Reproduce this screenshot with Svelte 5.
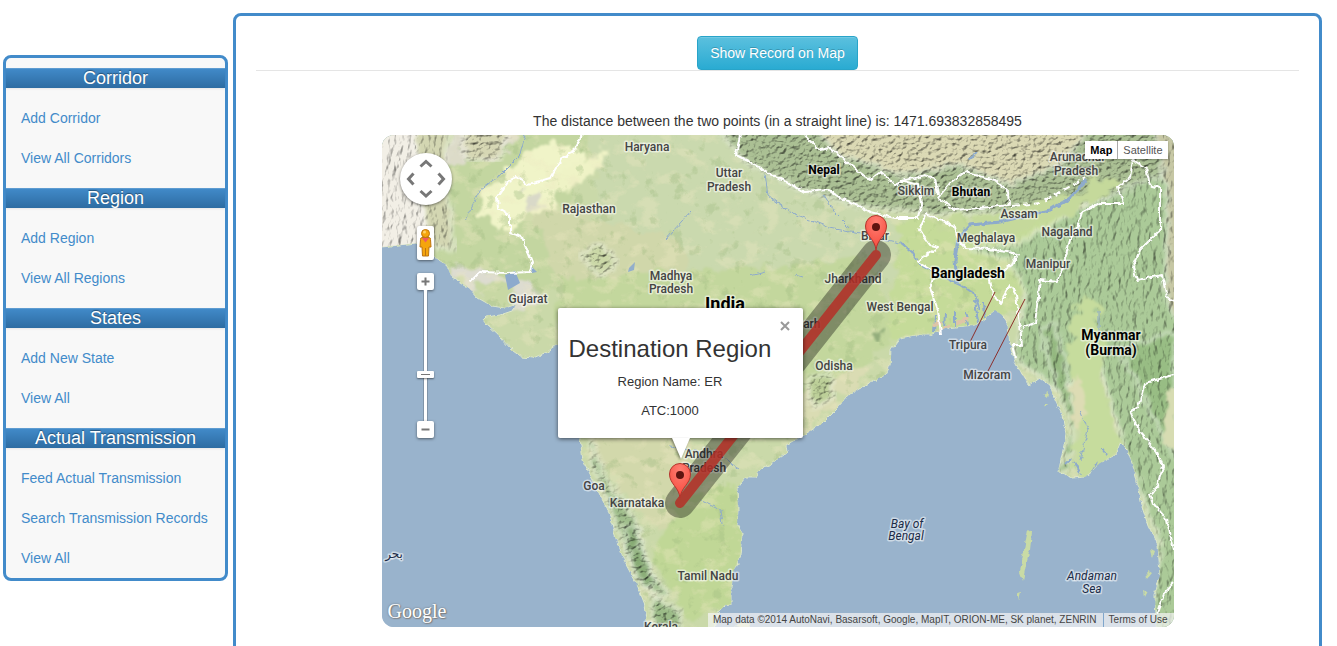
<script>
  const menu = [
    { title: 'Corridor', links: ['Add Corridor', 'View All Corridors'] },
    { title: 'Region', links: ['Add Region', 'View All Regions'] },
    { title: 'States', links: ['Add New State', 'View All'] },
    {
      title: 'Actual Transmission',
      links: ['Feed Actual Transmission', 'Search Transmission Records', 'View All'],
    },
  ];

  // Map coordinates share the viewBox of the terrain drawing.
  const states = [
    [647, 151, 'Haryana'],
    [729, 177, 'Uttar'],
    [729, 191, 'Pradesh'],
    [589, 213, 'Rajasthan'],
    [671, 280, 'Madhya'],
    [671, 293, 'Pradesh'],
    [528, 303, 'Gujarat'],
    [875, 240, 'Bihar'],
    [853, 283, 'Jharkhand'],
    [786, 328, 'Chhattisgarh'],
    [900, 311, 'West Bengal'],
    [834, 370, 'Odisha'],
    [916, 195, 'Sikkim'],
    [1077, 161, 'Arunachal'],
    [1076, 175, 'Pradesh'],
    [1019, 218, 'Assam'],
    [1067, 236, 'Nagaland'],
    [986, 242, 'Meghalaya'],
    [1048, 268, 'Manipur'],
    [968, 349, 'Tripura'],
    [987, 379, 'Mizoram'],
    [704, 458, 'Andhra'],
    [704, 472, 'Pradesh'],
    [594, 490, 'Goa'],
    [637, 507, 'Karnataka'],
    [708, 580, 'Tamil Nadu'],
    [661, 631, 'Kerala'],
  ];
  const countries = [
    [824, 174, 'Nepal', 12],
    [971, 196, 'Bhutan', 12],
    [968, 278, 'Bangladesh', 14],
    [1111, 340, 'Myanmar', 14],
    [1111, 355, '(Burma)', 14],
    [725, 310, 'India', 18],
  ];
  const seas = [
    [907, 528, 'Bay of'],
    [906, 540, 'Bengal'],
    [1092, 580, 'Andaman'],
    [1092, 593, 'Sea'],
  ];
  const pins = [
    [876, 229],
    [680, 477],
  ];
  const borders = [
    'M582 135L573 152L562 158L550 178L540 181L527 184L517 177L508 181L497 198L498 208L510 215V233L522 237L532 262L530 272L508 273L480 272L470 282',
    'M740 135L736 155L750 162L770 174L790 184L805 192L828 190L842 199L858 205L870 212L895 218H918L921 205L918 185L900 180',
    'M805 135L820 150L830 148L850 165L870 180L880 172L895 185L905 180L915 178L925 175L935 178L938 195',
    'M938 198L950 183L965 172L975 175L995 180L1008 192L1009 205L990 207L955 210Z',
    'M925 214L940 220L955 227L958 240L965 248L990 249L1018 254L1012 265L990 280L993 295L1000 303L1010 285L1016 295L1020 325L1022 345L1012 345L1015 358',
    'M925 216L919 230L930 245L938 247L917 262L935 272L930 288L938 310L941 334',
    'M1133 160L1130 177L1118 187L1123 203L1100 203L1082 212L1078 225L1070 240L1063 267L1057 282L1040 280L1035 323L1023 327',
    'M1133 160L1146 168L1150 185L1160 188V230L1140 250L1133 267L1137 280L1162 275L1167 298L1174 301',
    'M1174 375L1145 383L1138 407L1130 412L1140 432L1157 452L1163 466L1157 487L1150 495L1153 503L1167 520L1174 550',
    'M1174 583L1164 594L1157 613',
  ];
  const land =
    'M370 247L382 247L417 243L435 257L447 265L452 277L468 287L478 298L492 306L505 308L517 304L512 311L500 315L486 317L483 320L486 324L500 337L512 350L522 357L533 358L547 352L557 345L570 350L580 438L583 460L590 475L600 495L610 515L614 532L624 560L636 582L645 605L650 640H713L718 612L725 605L731 604V588L733 572L740 555L742 533L737 525L738 510L737 488L745 478L756 478L760 470L772 463L787 452L786 445L800 437L820 425L835 410L850 394L870 383L885 375L890 365L891 350L900 338L915 335L930 335L945 328L975 325L985 318L995 310L1002 315L1008 325L1010 345L1015 362L1022 375L1030 385L1040 378L1050 385L1055 400L1062 415L1066 435L1062 455L1058 472L1072 478L1085 477L1100 463L1115 455L1120 442L1128 450L1133 465L1138 485L1143 510L1148 525L1158 545L1160 575L1155 595L1157 640H1190V120H370Z';

  let zoom = $state(7);
  let mapType = $state('Map');
  let infoOpen = $state(true);
</script>

<div class="page">
  <nav class="sidebar" aria-label="Main">
    {#each menu as group}
      <section>
        <h2>{group.title}</h2>
        <ul>
          {#each group.links as link}
            <li><a href="#top">{link}</a></li>
          {/each}
        </ul>
      </section>
    {/each}
  </nav>

  <main>
    <div class="toolbar">
      <button class="primary" type="button" onclick={() => (infoOpen = true)}>Show Record on Map</button>
    </div>
    <p class="distance">The distance between the two points (in a straight line) is: 1471.693832858495</p>

    <div class="map">
      <svg class="terrain" viewBox="382 135 792 492" preserveAspectRatio="xMidYMid slice" aria-hidden="true">
        <defs>
          <filter id="rough" x="-5%" y="-5%" width="110%" height="110%">
            <feTurbulence type="fractalNoise" baseFrequency="0.16" numOctaves="3" seed="4" />
            <feDisplacementMap in="SourceGraphic" scale="5" xChannelSelector="R" yChannelSelector="G" />
          </filter>
          <filter id="patchy" x="-10%" y="-10%" width="120%" height="120%">
            <feTurbulence type="fractalNoise" baseFrequency="0.06" numOctaves="4" seed="9" />
            <feDisplacementMap in="SourceGraphic" scale="26" xChannelSelector="R" yChannelSelector="G" result="shape" />
            <feGaussianBlur in="shape" stdDeviation="1" />
          </filter>
          <filter id="relief" x="-5%" y="-5%" width="110%" height="110%" color-interpolation-filters="sRGB">
            <feTurbulence type="fractalNoise" baseFrequency="0.2 0.25" numOctaves="3" seed="12" result="n" />
            <feDiffuseLighting in="n" surfaceScale="2" diffuseConstant="1.2" lighting-color="#fff" result="lit">
              <feDistantLight azimuth="225" elevation="58" />
            </feDiffuseLighting>
            <feDisplacementMap in="SourceGraphic" in2="n" scale="16" xChannelSelector="R" yChannelSelector="G" result="s" />
            <feGaussianBlur in="s" stdDeviation="2" result="soft" />
            <feBlend in="lit" in2="soft" mode="multiply" result="m" />
            <feComposite in="m" in2="soft" operator="in" />
          </filter>
          <filter id="ridges" x="-5%" y="-5%" width="110%" height="110%" color-interpolation-filters="sRGB">
            <feTurbulence type="fractalNoise" baseFrequency="0.2 0.11" numOctaves="3" seed="3" result="n" />
            <feDiffuseLighting in="n" surfaceScale="1.5" diffuseConstant="1.2" lighting-color="#fff" result="lit">
              <feDistantLight azimuth="205" elevation="58" />
            </feDiffuseLighting>
            <feDisplacementMap in="SourceGraphic" in2="n" scale="16" xChannelSelector="R" yChannelSelector="G" result="s" />
            <feGaussianBlur in="s" stdDeviation="2" result="soft" />
            <feBlend in="lit" in2="soft" mode="multiply" result="m" />
            <feComposite in="m" in2="soft" operator="in" />
          </filter>
          <filter id="mottle" x="0" y="0" width="100%" height="100%" color-interpolation-filters="sRGB">
            <feTurbulence type="fractalNoise" baseFrequency="0.05 0.07" numOctaves="5" seed="21" />
            <feColorMatrix values="0 0 0 0 .93  0 0 0 0 .91  0 0 0 0 .76  0 5 0 0 -2.6" />
          </filter>
          <filter id="woods" x="0" y="0" width="100%" height="100%" color-interpolation-filters="sRGB">
            <feTurbulence type="fractalNoise" baseFrequency="0.07" numOctaves="5" seed="33" />
            <feColorMatrix values="0 0 0 0 .62  0 0 0 0 .73  0 0 0 0 .5  7 0 0 0 -4.3" />
          </filter>
          <clipPath id="coast"><path d={land} /></clipPath>
          <radialGradient id="pinFill" cx="50%" cy="20%" r="80%">
            <stop offset="0" stop-color="#ff8074" />
            <stop offset="1" stop-color="#f6483b" />
          </radialGradient>
        </defs>

        <rect x="370" y="120" width="820" height="520" fill="#99b3cc" />
        <path d={land} fill="#cad9a9" stroke="#dbe6c9" stroke-width="1" filter="url(#rough)" />

        <g clip-path="url(#coast)">
          <g filter="url(#patchy)">
            <path d="M450 125H600L570 200L560 290L500 290L440 265L445 190Z" fill="#c3d6a0" />
            <path d="M590 120H730L900 225L890 280L700 300L600 220Z" fill="#cad9ae" />
            <path d="M530 200L680 240L700 300L560 300Z" fill="#d0d7aa" />
            <path d="M558 280L870 260L900 330L830 400L560 340Z" fill="#c3d79d" />
            <path d="M584 430H690L690 540L640 520Z" fill="#d2d8ab" />
            <path d="M675 500L745 480V610L690 620L650 560Z" fill="#c0d796" />
            <path d="M900 220L1060 210L1080 250L1000 320L890 340Z" fill="#c5db99" />
            <path d="M470 160L520 145L515 130H450L440 165Z" fill="#dcdbc8" />
            <path d="M452 268L525 278L545 300L520 310L470 290Z" fill="#dddcd0" />
            <path d="M475 285L500 280L520 292L512 304L490 304Z" fill="#c8d8a4" />
            <path d="M545 140L575 145L590 160L570 180L560 200L525 215L505 232L485 215L478 218L486 190L500 180L515 165Z" fill="#f0f4c8" />
            <path d="M560 170L600 150L605 165L570 190L545 205Z" fill="#eff3c6" />
            <path d="M522 195L535 190L540 203L527 212Z" fill="#d9d9c8" />
            <path d="M808 385L880 365L850 390L815 420L790 440L780 430Z" fill="#dadcb3" />
          </g>
          <rect x="382" y="135" width="792" height="492" filter="url(#mottle)" opacity=".35" />
          <rect x="382" y="135" width="792" height="492" filter="url(#woods)" opacity=".35" />

          <path d="M370 120H440L432 170L428 255H370Z" fill="#f2efe6" filter="url(#ridges)" />
          <path d="M415 130H450L445 175L455 250L430 245L420 200Z" fill="#d3d6b2" filter="url(#ridges)" />
          <path d="M460 120H510L500 160L465 160Z" fill="#d6d7b4" filter="url(#relief)" />

          <path d="M710 120H1190V190L1110 200L1020 212L935 214L860 206L800 190L745 162Z" fill="#abc094" filter="url(#relief)" />
          <path d="M800 115H1100L1060 165L1010 185L960 165L900 175L840 155Z" fill="#dbd9b4" filter="url(#relief)" />
          <path d="M965 248L1015 245L1050 225L1085 205L1125 190L1190 160V640L1150 640L1160 540L1120 440L1100 360L1060 390L1015 360L1025 290L1010 260Z" fill="#abca98" filter="url(#ridges)" />
          <path d="M1040 330L1055 380L1072 430L1058 475L1068 470L1076 420L1066 370L1055 320Z" fill="#93b77f" filter="url(#ridges)" />
          <path d="M1120 350L1145 400L1174 460V330Z" fill="#98bd84" filter="url(#ridges)" />
          <path d="M1155 130H1185V330L1165 300L1168 200Z" fill="#c6c7a4" filter="url(#ridges)" />
          <g filter="url(#patchy)">
            <path d="M1085 293L1100 310L1103 380L1112 420L1120 450L1095 470L1070 476L1078 430L1072 380L1066 345Z" fill="#c6dc9d" />
            <path d="M1068 385L1080 375L1086 410L1078 430Z" fill="#dddcb4" />
            <path d="M1165 400L1178 390V450L1163 440Z" fill="#d7dcb2" />
            <path d="M1012 212L1060 195L1110 178L1122 184L1085 205L1050 225L1010 235L965 235L930 222Z" fill="#c5d99b" />
          </g>
          <path d="M590 435L606 480L622 500L636 520L642 545L655 580L668 590L662 600L645 585L630 560L618 525L604 495L592 465Z" fill="#9fbd8b" filter="url(#relief)" />
          <path d="M650 595L668 605L682 612L680 640H655Z" fill="#9bbb87" filter="url(#relief)" />
          <path d="M625 525L636 528L640 548L655 582L645 590L630 560Z" fill="#86aa73" filter="url(#relief)" />
          <path d="M805 380L830 372L835 395L812 410Z" fill="#bccf98" filter="url(#relief)" />
          <path d="M875 326L884 330L880 340L873 335Z" fill="#93ad7c" filter="url(#patchy)" />
          <path d="M580 255L600 243L618 262L600 278Z" fill="#cbd8a7" filter="url(#relief)" />

          <g class="river" filter="url(#rough)">
            <path stroke-width="1" d="M525 135L520 155L500 175L480 190L465 220" />
            <path stroke-width="3" d="M957 282L955 260L958 238L970 225L1000 222L1050 210L1070 198L1086 180" />
            <path stroke-width="2" d="M900 242L912 252L920 265L945 278L960 285L975 295L980 310" />
            <path stroke-width="1" d="M765 175L768 195L790 212L830 228L870 236L900 243" />
            <path stroke-width="1" d="M824 195L835 213L850 228" />
            <path stroke-width="1" d="M665 240L690 212M750 276L765 272M795 275L802 277" />
            <path stroke-width="1" d="M670 447L720 455L740 470M700 500L720 510L722 525" />
            <path stroke-width="1" d="M1080 410L1088 430L1080 460M1099 310V335" />
            <path stroke-width="2" d="M968 160L978 152" />
          </g>
          <path d="M505 275L515 271L520 283L508 290Z" fill="#8daacd" />
          <path d="M530 265L537 272L532 273Z" fill="#8daacd" />
          <path d="M629 268L635 262L634 270L628 272Z" fill="#92aecb" />
          <g class="delta" filter="url(#rough)">
            <path d="M935 315L934 333M945 313L944 330M955 312V328M965 311L968 325M975 300L978 322M984 303L985 318" />
            <path d="M1065 465L1072 458M1080 475L1074 462M1090 475L1098 462M1102 448L1108 456" />
          </g>
          <path class="flats" filter="url(#rough)" d="M933 325L942 322M938 332L950 326M957 324L968 318" />
        </g>

        <g fill="#c9dba5" filter="url(#rough)">
          <path d="M1028 529L1032 532L1030 550L1026 565L1023 580L1020 572L1023 555Z" />
          <path d="M1017 593L1021 592L1019 600Z" />
          <path d="M1043 395L1048 392L1047 398ZM1044 405H1048L1045 408ZM1150 550L1154 552L1152 558ZM1147 570L1152 573L1148 578ZM1143 590L1147 592L1144 598Z" />
          <path d="M735 627L740 622L750 624L752 630Z" fill="#e2e4bd" />
        </g>

        <g class="borders" filter="url(#rough)">
          {#each borders as d}<path {d} />{/each}
          <path stroke-dasharray="7 4" d="M1012 206L1040 203L1060 192L1085 178" />
        </g>
        <path d="M995 292L970 342M1025 299L988 371" stroke="#8c2f2b" stroke-width="1" />

        <g class="state">
          {#each states as [x, y, name]}<text {x} {y}>{name}</text>{/each}
        </g>
        <g class="country">
          {#each countries as [x, y, name, size]}<text {x} {y} font-size={size}>{name}</text>{/each}
        </g>
        <g class="sea">
          {#each seas as [x, y, name]}<text {x} {y}>{name}</text>{/each}
          <text class="arabic" x="394" y="558">بحر</text>
        </g>

        <g fill="none" stroke-linecap="round">
          <path d="M876 255L680 503" stroke="#000" stroke-opacity=".35" stroke-width="30" />
          <path d="M876 255L680 503" stroke="#b52f27" stroke-opacity=".85" stroke-width="10" />
        </g>
        {#each pins as [x, y]}
          <g transform="translate({x} {y})">
            <path d="M0 21C-1 10 -10.500 7 -10.500 -3A10.500 10.500 0 0 1 10.500 -3C10.500 7 1 10 0 21Z" fill="url(#pinFill)" stroke="#b3352d" />
            <circle cy="-2" r="4" fill="#5e1410" />
          </g>
        {/each}
      </svg>

      <div class="controls">
        <div class="pan">
          <svg viewBox="0 0 52 52" aria-hidden="true">
            <path d="M20.500 13.500L26 8.500L31.500 13.500M20.500 38L26 43L31.500 38M13.500 20.500L8.500 26L13.500 31.500M38.500 20.500L43.500 26L38.500 31.500" />
          </svg>
        </div>
        <button class="pegman" type="button" aria-label="Street View">
          <svg viewBox="0 0 17 34" aria-hidden="true">
            <path d="M3.500 13.500Q3 12 5 11.500H12Q14 12 13.500 13.500L14 21H12L11.500 30H5.500L5 21H3Z" fill="#f5a50c" stroke="#bd7410" />
            <path d="M5 12H12L8.500 16.500Z" fill="#ee5c63" />
            <path d="M8.500 22V30" stroke="#bd7410" />
            <circle cx="8.500" cy="7.500" r="4" fill="#f5a50c" stroke="#bd7410" />
            <circle cx="7.500" cy="6" r="1.500" fill="#ffd36b" />
          </svg>
        </button>
        <button class="step" type="button" aria-label="Zoom in" onclick={() => (zoom = Math.min(20, zoom + 1))}>
          <svg viewBox="0 0 17 17" aria-hidden="true"><path d="M4.500 8.500H12.500M8.500 4.500V12.500" /></svg>
        </button>
        <input type="range" min="0" max="20" bind:value={zoom} aria-label="Zoom level" />
        <button class="step" type="button" aria-label="Zoom out" onclick={() => (zoom = Math.max(0, zoom - 1))}>
          <svg viewBox="0 0 17 17" aria-hidden="true"><path d="M4.500 8.500H12.500" /></svg>
        </button>
      </div>

      <div class="types">
        {#each ['Map', 'Satellite'] as type}
          <button type="button" class:active={mapType === type} onclick={() => (mapType = type)}>{type}</button>
        {/each}
      </div>

      {#if infoOpen}
        <div class="info">
          <button type="button" aria-label="Close" onclick={() => (infoOpen = false)}>
            <svg viewBox="0 0 10 10" aria-hidden="true"><path d="M1 1L9 9M9 1L1 9" /></svg>
          </button>
          <h3>Destination Region</h3>
          <p>Region Name: ER</p>
          <p>ATC:1000</p>
        </div>
      {/if}

      <span class="logo">Google</span>
      <div class="credits">
        <span>Map data ©2014 AutoNavi, Basarsoft, Google, MapIT, ORION-ME, SK planet, ZENRIN</span>
        <a href="#terms">Terms of Use</a>
      </div>
    </div>
  </main>
</div>

<style>
  :global(body) {
    background: #fff;
    color: #333;
    font: 14px/20px 'Liberation Sans', Arial, sans-serif;
  }
  .page {
    display: flex;
    align-items: flex-start;
    gap: 5px;
    padding: 13px 15px 0 3px;
  }
  .sidebar,
  main {
    box-sizing: border-box;
    border: 3px solid #428bca;
    border-radius: 8px;
  }
  .sidebar {
    flex: 0 0 225px;
    margin-top: 42px;
    padding-top: 10px;
    background: #f8f8f8;
  }
  h2 {
    margin: 0;
    background: linear-gradient(#428bca, #2d6ca2);
    box-shadow: inset 0 1px 0 rgba(255, 255, 255, 0.15), 0 1px 2px rgba(0, 0, 0, 0.08);
    color: #fff;
    font-size: 18px;
    font-weight: 400;
    line-height: 20px;
    text-align: center;
    text-shadow: 0 -1px 1px rgba(0, 0, 0, 0.4);
  }
  ul {
    margin: 0;
    padding: 10px 0;
    list-style: none;
  }
  section:last-child ul {
    padding-bottom: 0;
  }
  li a {
    display: block;
    padding: 10px 15px;
    color: #428bca;
    text-decoration: none;
  }
  main {
    flex: 1;
    min-width: 0;
    padding: 20px 20px 40px;
  }
  .toolbar {
    border-bottom: 1px solid #e5e5e5;
    text-align: center;
    line-height: 0;
  }
  .primary {
    padding: 6px 12px;
    border: 1px solid #28a4c9;
    border-radius: 4px;
    background: linear-gradient(#5bc0de, #2aabd2);
    box-shadow: inset 0 1px 0 rgba(255, 255, 255, 0.15);
    color: #fff;
    font: inherit;
    line-height: 20px;
    text-shadow: 0 -1px 0 rgba(0, 0, 0, 0.2);
  }
  .distance {
    margin: 40px 0 4px;
    text-align: center;
  }
  .map {
    position: relative;
    max-width: 792px;
    height: 492px;
    margin: 0 auto;
    overflow: hidden;
    border-radius: 12px;
    background: #99b3cc;
    font-family: 'Liberation Sans', Arial, sans-serif;
  }
  .terrain {
    display: block;
    width: 100%;
    height: 100%;
  }
  .river,
  .delta {
    fill: none;
    stroke: #8eabcb;
  }
  .delta {
    stroke-width: 2;
  }
  .flats {
    stroke: #dfc4a8;
    stroke-width: 4;
  }
  .borders {
    fill: none;
    stroke: #fff;
    stroke-width: 2;
    stroke-linejoin: round;
  }
  .terrain text {
    font-family: Roboto, sans-serif;
    text-anchor: middle;
    paint-order: stroke;
    stroke: rgba(255, 255, 255, 0.5);
    stroke-width: 3px;
    stroke-linejoin: round;
  }
  .state text {
    fill: #444;
    font-size: 12px;
    font-weight: 500;
  }
  .country text {
    fill: #000;
    font-weight: 700;
  }
  .sea text {
    fill: #1c2c48;
    font-size: 12px;
    font-style: italic;
  }
  .terrain .arabic {
    font-family: 'DejaVu Sans', sans-serif;
    font-style: normal;
  }
  button {
    cursor: pointer;
  }
  .controls {
    position: absolute;
    top: 18px;
    left: 18px;
    display: flex;
    flex-direction: column;
    align-items: center;
  }
  .controls svg {
    display: block;
    width: 100%;
    height: 100%;
    fill: none;
  }
  .pan,
  .pegman,
  .step {
    background: #fff;
    box-shadow: 0 1px 3px rgba(0, 0, 0, 0.5);
  }
  .pan {
    width: 52px;
    height: 52px;
    border-radius: 50%;
  }
  .pan path {
    stroke: #777;
    stroke-width: 3px;
  }
  .pegman,
  .step {
    width: 17px;
    padding: 0;
    border: 0;
    border-radius: 2px;
  }
  .pegman {
    height: 34px;
    margin: 21px 0 13px;
  }
  .step {
    height: 17px;
  }
  .step path {
    stroke: #777;
    stroke-width: 2px;
  }
  input {
    width: 17px;
    height: 131px;
    margin: 0;
    appearance: none;
    writing-mode: vertical-lr;
    direction: rtl;
    background: linear-gradient(90deg, #8094a8 1px, #fff 1px, #fff 4px, #8094a8 4px) center / 5px 100% no-repeat;
  }
  input::-webkit-slider-thumb {
    appearance: none;
    width: 17px;
    height: 7px;
    border-radius: 1px;
    background: linear-gradient(#777, #777) center / 9px 1px no-repeat #fff;
    box-shadow: 0 1px 2px rgba(0, 0, 0, 0.5);
  }
  .types {
    position: absolute;
    top: 6px;
    right: 6px;
    display: flex;
    box-shadow: 0 1px 2px rgba(0, 0, 0, 0.3);
  }
  .types button {
    height: 18px;
    padding: 0 5px;
    border: 0;
    background: #fff;
    color: #555;
    font: 11px/18px 'Liberation Sans', Arial, sans-serif;
  }
  .types .active {
    color: #000;
    font-weight: 700;
  }
  .types button + button {
    border-left: 1px solid #aaa;
  }
  .info {
    position: absolute;
    top: 173px;
    left: 176px;
    box-sizing: border-box;
    width: 245px;
    height: 130px;
    padding: 26px 31px 0 11px;
    border-radius: 2px;
    background: #fff;
    box-shadow: 0 1px 4px rgba(0, 0, 0, 0.6);
    text-align: center;
  }
  .info::after {
    content: '';
    position: absolute;
    top: 100%;
    left: 114px;
    border: solid transparent;
    border-width: 21px 9px 0;
    border-top-color: #fff;
    filter: drop-shadow(-1px 1px 1px rgba(0, 0, 0, 0.4));
  }
  .info button {
    position: absolute;
    top: 13px;
    right: 13px;
    width: 10px;
    height: 10px;
    padding: 0;
    border: 0;
    background: none;
  }
  .info button svg {
    display: block;
    stroke: #999;
    stroke-width: 2px;
  }
  h3 {
    margin: 0 0 8px;
    font-size: 24px;
    font-weight: 400;
    line-height: 30px;
    white-space: nowrap;
    text-align: left;
  }
  .info p {
    margin: 0 0 10px;
    font-size: 13px;
    line-height: 19px;
  }
  .logo {
    position: absolute;
    left: 6px;
    bottom: 4px;
    color: #fff;
    font: 20px/24px 'Liberation Serif', serif;
    text-shadow: 0 0 2px #666, 1px 1px 1px #888;
  }
  .credits {
    position: absolute;
    right: 0;
    bottom: 0;
    display: flex;
    background: rgba(245, 245, 245, 0.7);
    color: #444;
    font-size: 10px;
    line-height: 14px;
    white-space: nowrap;
  }
  .credits span,
  .credits a {
    padding: 0 6px 0 5px;
  }
  .credits a {
    border-left: 1px solid #7fa6cc;
    color: #444;
    text-decoration: none;
  }
</style>
